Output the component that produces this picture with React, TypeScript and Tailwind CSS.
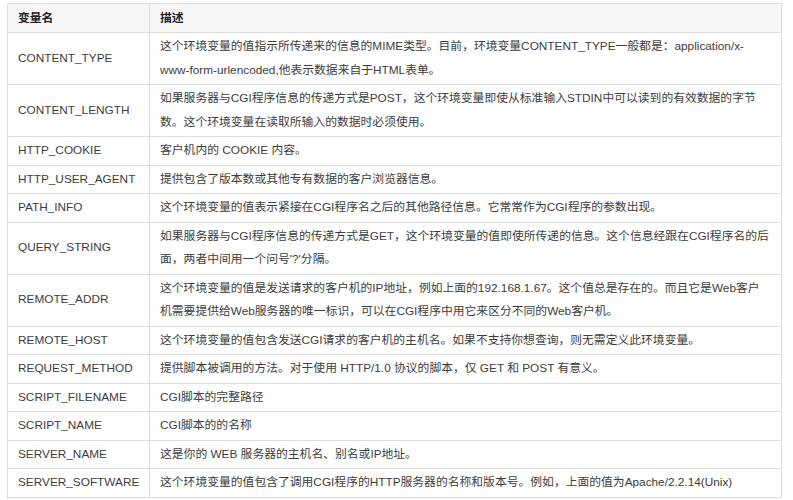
import React from "react";

const rows: [string, React.ReactNode][] = [
  ["CONTENT_TYPE", <>这个环境变量的值指示所传递来的信息的MIME类型。目前，环境变量CONTENT_TYPE一般都是：application/x-<br />www-form-urlencoded,他表示数据来自于HTML表单。</>],
  ["CONTENT_LENGTH", <>如果服务器与CGI程序信息的传递方式是POST，这个环境变量即使从标准输入STDIN中可以读到的有效数据的字节<br />数。这个环境变量在读取所输入的数据时必须使用。</>],
  ["HTTP_COOKIE", <>客户机内的 COOKIE 内容。</>],
  ["HTTP_USER_AGENT", <>提供包含了版本数或其他专有数据的客户浏览器信息。</>],
  ["PATH_INFO", <>这个环境变量的值表示紧接在CGI程序名之后的其他路径信息。它常常作为CGI程序的参数出现。</>],
  ["QUERY_STRING", <>如果服务器与CGI程序信息的传递方式是GET，这个环境变量的值即使所传递的信息。这个信息经跟在CGI程序名的后<br />面，两者中间用一个问号'?'分隔。</>],
  ["REMOTE_ADDR", <>这个环境变量的值是发送请求的客户机的IP地址，例如上面的192.168.1.67。这个值总是存在的。而且它是Web客户<br />机需要提供给Web服务器的唯一标识，可以在CGI程序中用它来区分不同的Web客户机。</>],
  ["REMOTE_HOST", <>这个环境变量的值包含发送CGI请求的客户机的主机名。如果不支持你想查询，则无需定义此环境变量。</>],
  ["REQUEST_METHOD", <>提供脚本被调用的方法。对于使用 HTTP/1.0 协议的脚本，仅 GET 和 POST 有意义。</>],
  ["SCRIPT_FILENAME", <>CGI脚本的完整路径</>],
  ["SCRIPT_NAME", <>CGI脚本的的名称</>],
  ["SERVER_NAME", <>这是你的 WEB 服务器的主机名、别名或IP地址。</>],
  ["SERVER_SOFTWARE", <>这个环境变量的值包含了调用CGI程序的HTTP服务器的名称和版本号。例如，上面的值为Apache/2.2.14(Unix)</>],
];

export default function App() {
  return (
    <div className="w-[793px] h-[500px] bg-white pt-[3px] pl-[7px] overflow-hidden" style={{ fontFamily: '"Liberation Sans", Arial, "Noto Sans CJK SC", sans-serif' }}>
      <table className="w-[775px] border-collapse border border-[#dedede] text-[11.8px] text-[#3d3d3d] table-fixed">
        <colgroup>
          <col className="w-[142px]" />
          <col />
        </colgroup>
        <thead>
          <tr className="bg-[#f6f6f6] h-[29px]">
            <th className="border border-[#dedede] px-[10px] py-0 text-left font-bold text-[#222] leading-[20px]">变量名</th>
            <th className="border border-[#dedede] px-[10px] py-0 text-left font-bold text-[#222] leading-[20px]">描述</th>
          </tr>
        </thead>
        <tbody>
          {rows.map(([k, v]) => (
            <tr key={k}>
              <td className="border border-[#dedede] px-[10px] py-[2px] leading-[23.5px] align-middle whitespace-nowrap overflow-hidden">{k}</td>
              <td className="border border-[#dedede] px-[10px] py-[2px] leading-[23.5px] align-middle whitespace-nowrap overflow-hidden">{v}</td>
            </tr>
          ))}
        </tbody>
      </table>
    </div>
  );
}
